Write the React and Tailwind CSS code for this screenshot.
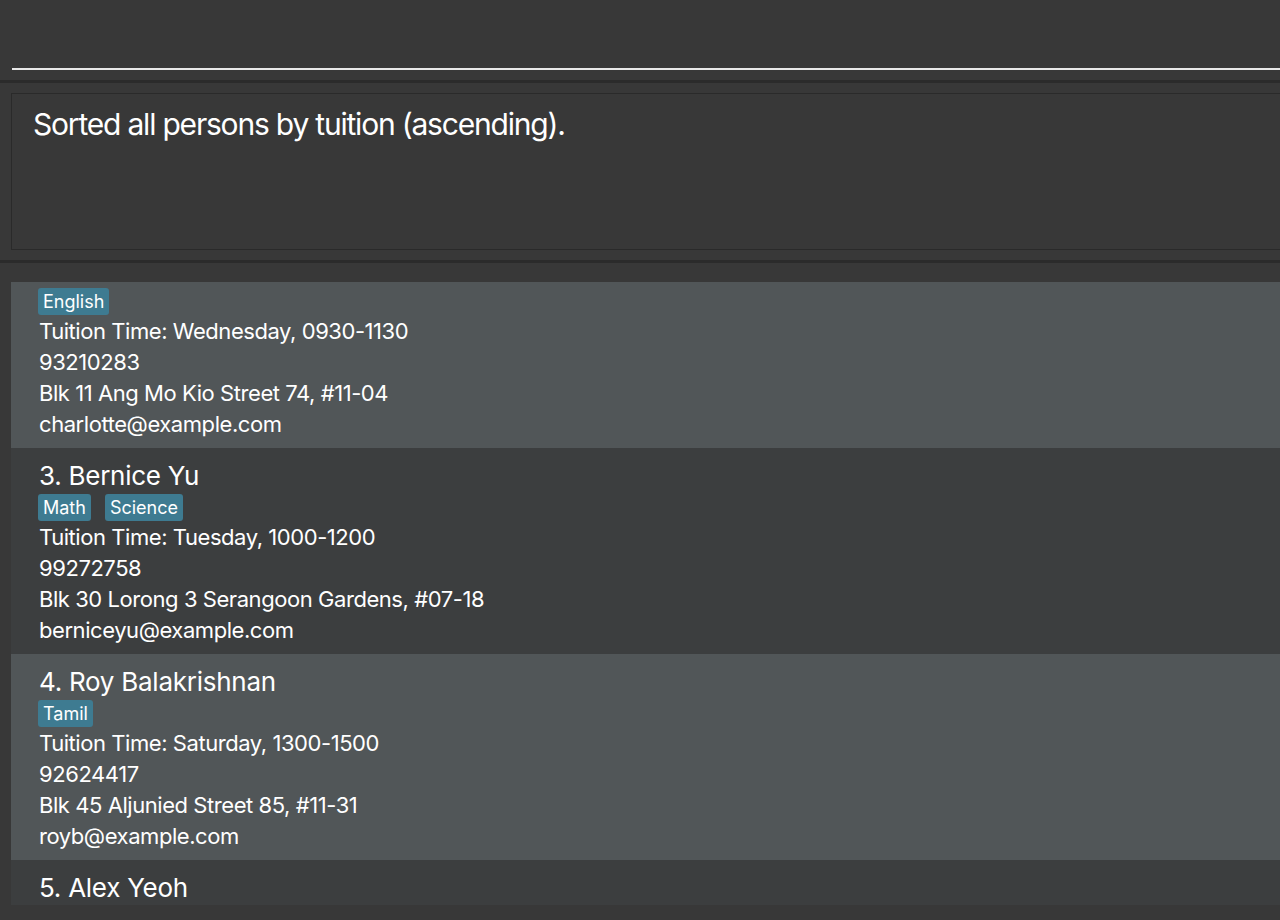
import React from "react";

const persons = [
  {
    name: "2. Charlotte Oliveiro",
    tags: ["English"],
    time: "Tuition Time: Wednesday, 0930-1130",
    phone: "93210283",
    address: "Blk 11 Ang Mo Kio Street 74, #11-04",
    email: "charlotte@example.com",
  },
  {
    name: "3. Bernice Yu",
    tags: ["Math", "Science"],
    time: "Tuition Time: Tuesday, 1000-1200",
    phone: "99272758",
    address: "Blk 30 Lorong 3 Serangoon Gardens, #07-18",
    email: "berniceyu@example.com",
  },
  {
    name: "4. Roy Balakrishnan",
    tags: ["Tamil"],
    time: "Tuition Time: Saturday, 1300-1500",
    phone: "92624417",
    address: "Blk 45 Aljunied Street 85, #11-31",
    email: "royb@example.com",
  },
  {
    name: "5. Alex Yeoh",
    tags: ["Math"],
    time: "Tuition Time: Monday, 1400-1600",
    phone: "87438807",
    address: "Blk 30 Geylang Street 29, #06-40",
    email: "alexyeoh@example.com",
  },
];

function Card({ p, odd, first }) {
  return (
    <div
      className={
        "h-[206px] w-[1300px] pl-[28px] pt-[12px] text-white " +
        (odd ? "bg-[#515658] " : "bg-[#3c3e3f] ") +
        (first ? "-mt-[40px]" : "")
      }
    >
      <div className="h-[32px] text-[26px] leading-[32px] tracking-[-0.01em]">{p.name}</div>
      <div className="mt-[2px] flex h-[27px] gap-[14px] -ml-[1px]">
        {p.tags.map((t) => (
          <span
            key={t}
            className="flex h-[27px] items-center rounded-[3px] bg-[#3e7b91] px-[5px] text-[18px] text-white"
          >
            {t}
          </span>
        ))}
      </div>
      <div className="mt-[1px] text-[22px] leading-[31px] tracking-[-0.02em]">
        <div>{p.time}</div>
        <div>{p.phone}</div>
        <div>{p.address}</div>
        <div>{p.email}</div>
      </div>
    </div>
  );
}

export default function App() {
  return (
    <div className="h-[920px] w-[1280px] overflow-hidden bg-[#383838] font-['Inter',sans-serif]">
      {/* command box */}
      <div className="h-[80px] pl-[12px]">
        <div className="h-[70px] w-[1300px] border-b-2 border-[#e8e8e8]" />
      </div>
      <div className="h-[3px] bg-[#2b2b2b]" />
      {/* result display */}
      <div className="pl-[11px] pt-[10px] pb-[10px]">
        <div className="h-[157px] w-[1300px] border border-[#2a2a2a] bg-[#383838] pl-[21px] pt-[12px] text-[30px] leading-[36px] tracking-[-0.04em] text-white">
          Sorted all persons by tuition (ascending).
        </div>
      </div>
      <div className="h-[3px] bg-[#2b2b2b]" />
      {/* list */}
      <div className="pl-[11px] pt-[19px]">
        <div className="h-[623px] overflow-hidden">
          {persons.map((p, i) => (
            <Card key={p.name} p={p} odd={i % 2 === 0} first={i === 0} />
          ))}
        </div>
      </div>
    </div>
  );
}
